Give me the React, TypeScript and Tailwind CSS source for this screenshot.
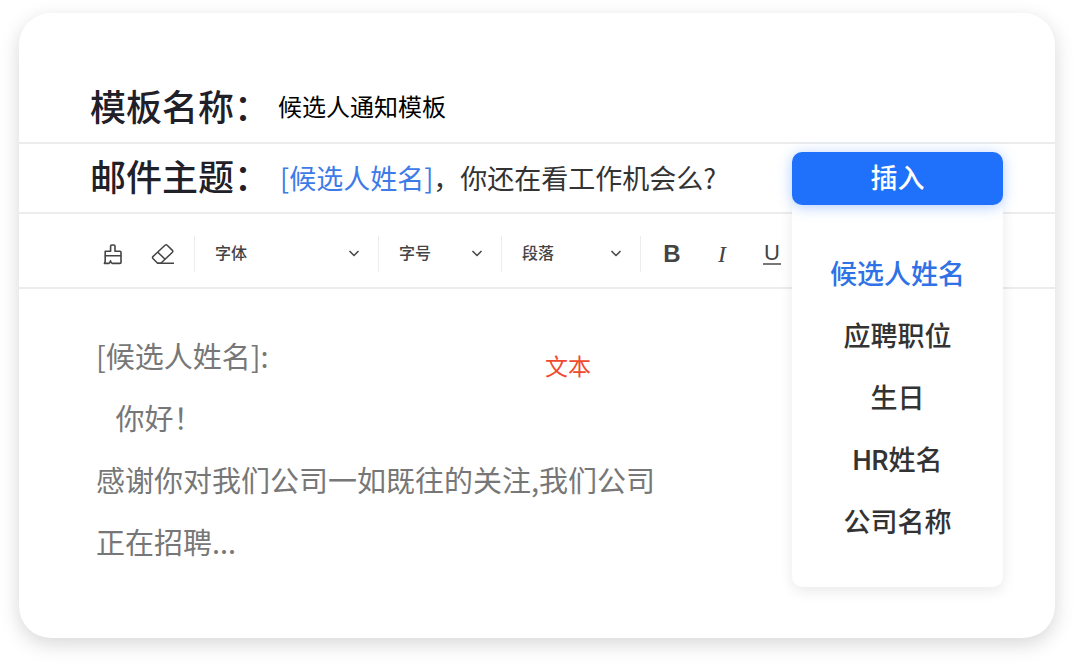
import { useState } from "react";
import type { ReactNode } from "react";
import { clsx } from "clsx";

const VARIABLES = ["候选人姓名", "应聘职位", "生日", "HR姓名", "公司名称"];

const BODY = `[候选人姓名]:
   你好！
感谢你对我们公司一如既往的关注,我们公司
正在招聘...`;

function BrushIcon() {
  return (
    <svg width="20" height="22" viewBox="0 0 20 22" fill="none" stroke="currentColor" strokeWidth="1.6" strokeLinejoin="round">
      <path d="M2.200 8.200h5.400V3.200c0-.7.5-1.200 1.200-1.200h2c.7 0 1.200.5 1.200 1.200v5H17c.6 0 1 .4 1 1v3.600H2.200z" />
      <path d="M2.200 12.800v4.400c0 1.300-.2 2.300-.8 3.200H6c.9-.6 1.400-1.400 1.500-2.500.2 1.200.7 2 1.600 2.500h7.900c.6 0 1-.4 1-1v-6.600" />
    </svg>
  );
}

function EraserIcon() {
  return (
    <svg width="24" height="22" viewBox="0 0 24 22" fill="none" stroke="currentColor" strokeWidth="1.5" strokeLinejoin="round">
      <path d="M14 2.200 1.900 13.600c-.6.600-.6 1.300 0 1.900l4.700 4.800h3.200L21.400 9.300c.6-.6.600-1.300 0-1.900l-5.200-5.200c-.6-.6-1.500-.6-2.200 0z" />
      <path d="M6.800 9.200l7.300 7.100M6.600 20.300H23" />
    </svg>
  );
}

function ChevronIcon() {
  return (
    <svg
      className="pointer-events-none -ml-3 shrink-0"
      width="12"
      height="8"
      viewBox="0 0 12 8"
      fill="none"
      stroke="currentColor"
      strokeWidth="1.5"
    >
      <path d="M1.500 1 6 5.500 10.500 1" />
    </svg>
  );
}

function Divider() {
  return <span className="h-9 w-px shrink-0 bg-[#ececec]" />;
}

function ToolSelect({ label, className }: { label: string; className: string }) {
  return (
    <div className={clsx("flex shrink-0 items-center pl-5", className)}>
      <select aria-label={label} className="w-full appearance-none bg-transparent text-base font-medium text-[#444]">
        <option>{label}</option>
      </select>
      <ChevronIcon />
    </div>
  );
}

function ToolButton({ label, children }: { label: string; children: ReactNode }) {
  return (
    <button type="button" aria-label={label} className="flex w-[50px] shrink-0 items-center justify-center">
      {children}
    </button>
  );
}

export default function App() {
  const [selected, setSelected] = useState("候选人姓名");

  return (
    <main className="bg-white pt-[13px] pr-[25px] pb-[25px] pl-[19px] font-['Liberation_Sans','Noto_Sans_CJK_SC',sans-serif] text-[#444]">
      <div className="rounded-[32px] bg-white shadow-[0_6px_20px_rgba(0,0,0,0.16)]">
        <div className="flex items-center border-b-2 border-[#ececec] pt-[61px] pl-[71px]">
          <label htmlFor="name" className="w-[188px] shrink-0 pt-0.5 text-4xl leading-[66px] font-medium text-[#1f2028]">
            模板名称：
          </label>
          <input
            id="name"
            defaultValue="候选人通知模板"
            className="min-w-0 flex-1 bg-transparent text-2xl text-black outline-none"
          />
        </div>

        <div className="flex items-center border-b-2 border-[#ececec] pr-[52px] pl-[71px]">
          <span id="subject" className="w-[188px] shrink-0 pt-0.5 text-4xl leading-[66px] font-medium text-[#1f2028]">
            邮件主题：
          </span>
          <div
            role="textbox"
            aria-labelledby="subject"
            contentEditable
            suppressContentEditableWarning
            className="min-w-0 flex-1 pl-0.5 font-['Noto_Sans_CJK_SC',sans-serif] text-[27px] leading-10 whitespace-nowrap text-[#333] outline-none"
          >
            <span className="text-[#3d7be8]">[候选人姓名]</span>，你还在看工作机会么?
          </div>
          <div className="relative w-[211px] shrink-0">
            <button
              type="button"
              className="relative z-20 block h-[53px] w-full rounded-[10px] bg-[#1f70fb] pt-0.5 text-[27px] font-medium text-white shadow-[0_2px_14px_rgba(31,112,251,0.35)]"
            >
              插入
            </button>
            <ul className="absolute top-full left-0 z-10 w-full rounded-b-[10px] bg-white pt-10 pb-8 font-['Roboto','Noto_Sans_CJK_SC',sans-serif] shadow-[0_4px_14px_rgba(0,0,0,0.09)]">
              {VARIABLES.map((name) => (
                <li key={name}>
                  <button
                    type="button"
                    onClick={() => setSelected(name)}
                    className={clsx(
                      "block h-[62px] w-full text-[27px] font-medium",
                      selected === name ? "text-[#2f72e6]" : "text-[#333]",
                    )}
                  >
                    {name}
                  </button>
                </li>
              ))}
            </ul>
          </div>
        </div>

        <div className="flex h-[75px] items-center overflow-hidden border-b-2 border-[#ececec] pt-1.5 pl-[69px]">
          <ToolButton label="格式刷">
            <BrushIcon />
          </ToolButton>
          <ToolButton label="清除格式">
            <EraserIcon />
          </ToolButton>
          <span className="w-1.5" />
          <Divider />
          <ToolSelect label="字体" className="w-[183px] pr-[18px]" />
          <Divider />
          <ToolSelect label="字号" className="w-[122px] pr-[18px]" />
          <Divider />
          <ToolSelect label="段落" className="w-[138px] pr-[18px]" />
          <Divider />
          <span className="w-1.5" />
          <ToolButton label="加粗">
            <span className="text-2xl font-bold">B</span>
          </ToolButton>
          <ToolButton label="斜体">
            <span className="font-['Liberation_Serif',serif] text-2xl italic">I</span>
          </ToolButton>
          <ToolButton label="下划线">
            <span className="border-b-2 border-[#777] px-px text-[22px] leading-5">U</span>
          </ToolButton>
        </div>

        <div className="relative pt-[35px] pr-[270px] pb-[66px] pl-[77px]">
          <textarea
            aria-label="邮件正文"
            rows={4}
            defaultValue={BODY}
            className="block w-full resize-none overflow-hidden bg-transparent font-['Noto_Sans_CJK_SC',sans-serif] text-[29px] leading-[62px] whitespace-pre text-[#777] outline-none"
          />
          <span className="absolute top-[60px] left-[526px] text-[23px] leading-9 text-[#f04a2e]">文本</span>
        </div>
      </div>
    </main>
  );
}
